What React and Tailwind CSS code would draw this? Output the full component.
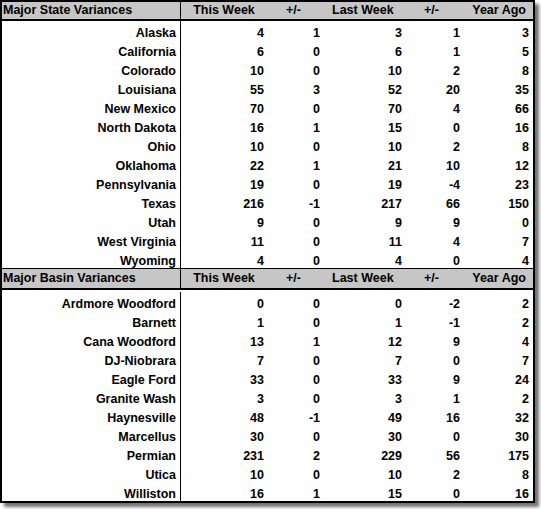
import React from "react";

const STATES = [
  ["Alaska", 4, 1, 3, 1, 3],
  ["California", 6, 0, 6, 1, 5],
  ["Colorado", 10, 0, 10, 2, 8],
  ["Louisiana", 55, 3, 52, 20, 35],
  ["New Mexico", 70, 0, 70, 4, 66],
  ["North Dakota", 16, 1, 15, 0, 16],
  ["Ohio", 10, 0, 10, 2, 8],
  ["Oklahoma", 22, 1, 21, 10, 12],
  ["Pennsylvania", 19, 0, 19, -4, 23],
  ["Texas", 216, -1, 217, 66, 150],
  ["Utah", 9, 0, 9, 9, 0],
  ["West Virginia", 11, 0, 11, 4, 7],
  ["Wyoming", 4, 0, 4, 0, 4],
];

const BASINS = [
  ["Ardmore Woodford", 0, 0, 0, -2, 2],
  ["Barnett", 1, 0, 1, -1, 2],
  ["Cana Woodford", 13, 1, 12, 9, 4],
  ["DJ-Niobrara", 7, 0, 7, 0, 7],
  ["Eagle Ford", 33, 0, 33, 9, 24],
  ["Granite Wash", 3, 0, 3, 1, 2],
  ["Haynesville", 48, -1, 49, 16, 32],
  ["Marcellus", 30, 0, 30, 0, 30],
  ["Permian", 231, 2, 229, 56, 175],
  ["Utica", 10, 0, 10, 2, 8],
  ["Williston", 16, 1, 15, 0, 16],
];

// per-column width + value padding
const COLS = [
  "w-[179px] pr-[4px] border-r border-black",
  "w-[86px] pr-[3px]",
  "w-[60px] pr-[7px]",
  "w-[80px] pr-[5px]",
  "w-[58px] pr-[5px]",
  "w-[66px] pr-[2px]",
];

const Header = ({ title, tall }) => (
  <div
    className={`flex ${tall ? "h-[21px]" : "h-[19px]"} items-center bg-[#c6c6c6] border-b-2 border-black`}
  >
    <div className="w-[179px] pl-[1px] border-r border-black h-full flex items-center">
      {title}
    </div>
    <div className="w-[86px] text-center">This Week</div>
    <div className="w-[60px] pl-[19px]">+/-</div>
    <div className="w-[80px] pl-[5px]">Last Week</div>
    <div className="w-[58px] pl-[17px]">+/-</div>
    <div className="w-[66px] text-right pr-[5px]">Year Ago</div>
  </div>
);

const Row = ({ row }) => (
  <div className="flex h-[19px]">
    {row.map((cell, i) => (
      <div
        key={i}
        className={`${COLS[i]} h-full flex items-end justify-end pb-[1px]`}
      >
        {cell}
      </div>
    ))}
  </div>
);

export default function App() {
  return (
    <div className="w-[541px] h-[509px] bg-white">
      <div
        className="w-[535px] border-2 border-black bg-white text-black font-bold text-[12.5px] leading-none shadow-[4px_4px_3px_rgba(0,0,0,0.55)]"
        style={{ fontFamily: '"Liberation Sans", Arial, sans-serif' }}
      >
        <Header title="Major State Variances" />
        <div>
          {STATES.map((r) => (
            <Row key={r[0]} row={r} />
          ))}
        </div>
        <div className="border-t border-black">
          <Header title="Major Basin Variances" tall />
        </div>
        <div className="pt-[2px]">
          {BASINS.map((r) => (
            <Row key={r[0]} row={r} />
          ))}
        </div>
      </div>
    </div>
  );
}
